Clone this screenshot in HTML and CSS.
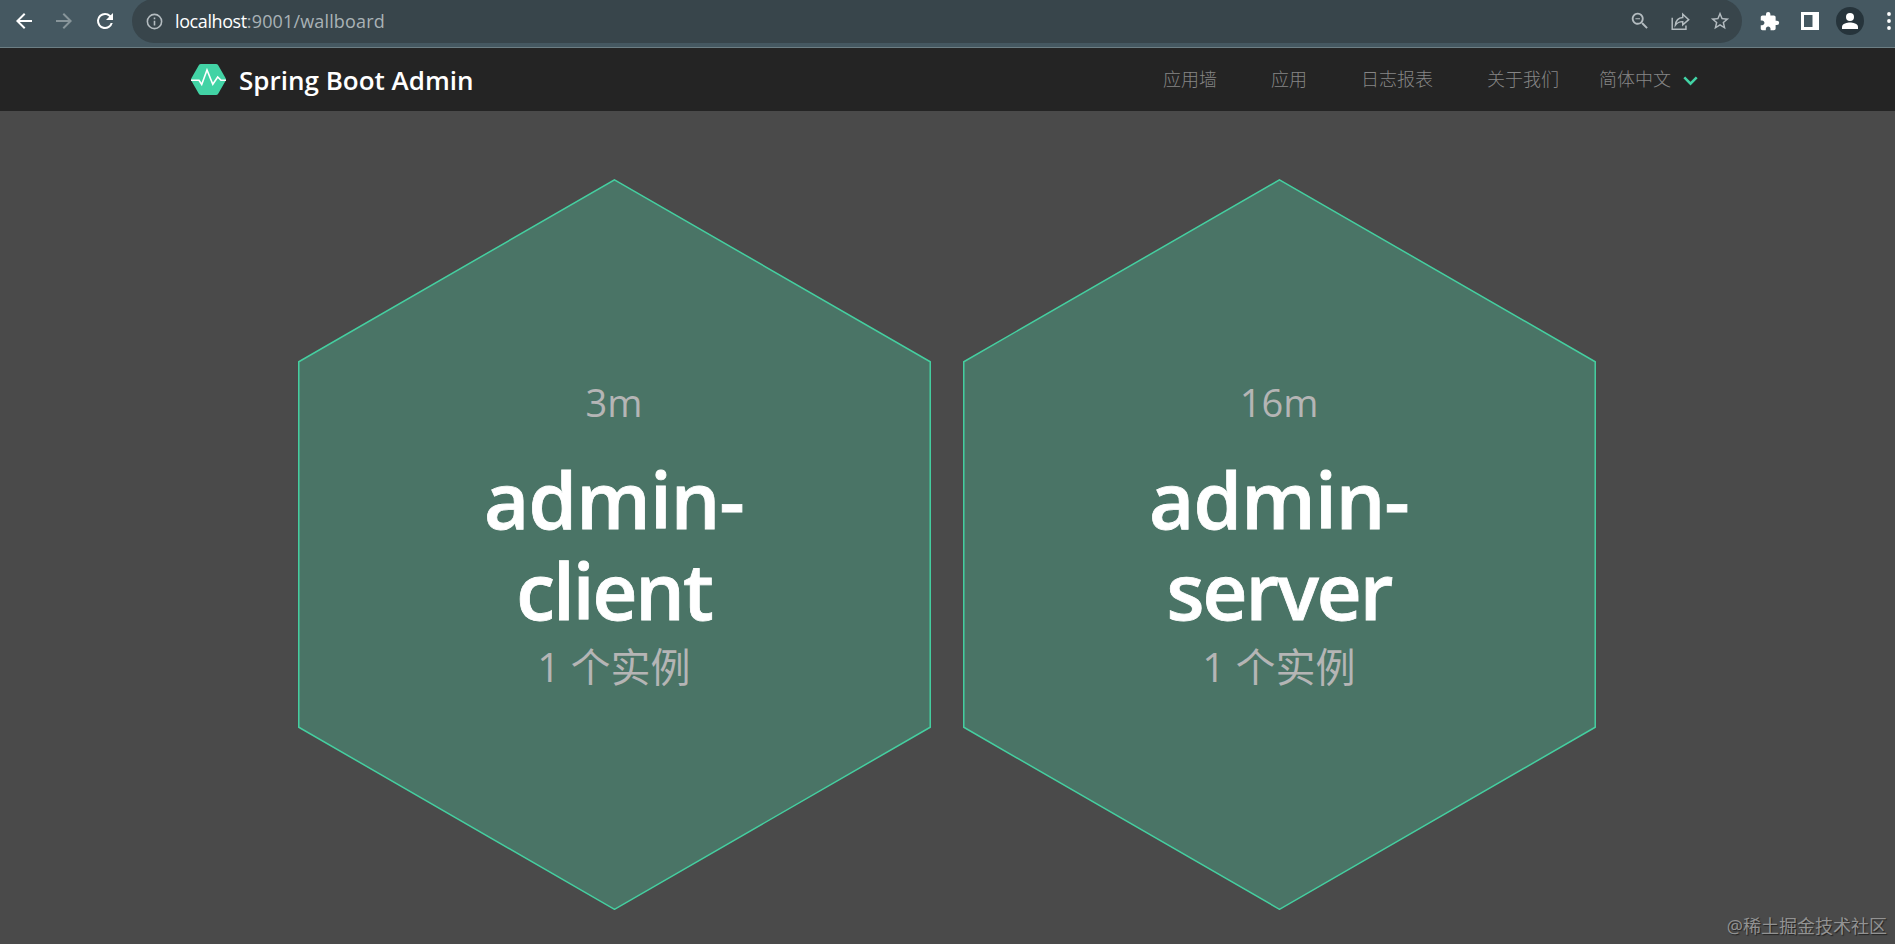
FILE: index.html
```html
<!DOCTYPE html>
<html lang="zh-CN">
<head>
    <meta charset="UTF-8">
    <meta name="viewport" content="width=device-width, initial-scale=1.0">
    <title>Spring Boot Admin</title>
    <link rel="stylesheet" href="styles.css">
</head>
<body>
    <div class="toolbar">
        <div class="nav-buttons">
            <svg class="icon-back" viewBox="0 0 24 24"><path d="M20 11H7.83l5.59-5.59L12 4l-8 8 8 8 1.41-1.41L7.83 13H20z"/></svg>
            <svg class="icon-forward" viewBox="0 0 24 24"><path d="M12 4l-1.41 1.41L16.17 11H4v2h12.17l-5.58 5.59L12 20l8-8z"/></svg>
            <svg class="icon-reload" viewBox="0 0 24 24"><path d="M17.65 6.35A7.96 7.96 0 0 0 12 4a8 8 0 1 0 7.73 10h-2.08A6 6 0 1 1 12 6c1.66 0 3.14.69 4.22 1.78L13 11h7V4z"/></svg>
        </div>
        <div class="address-bar">
            <svg class="icon-info" viewBox="0 0 24 24"><path d="M11 7h2v2h-2zm0 4h2v6h-2zm1-9a10 10 0 1 0 0 20 10 10 0 0 0 0-20zm0 18a8 8 0 1 1 0-16 8 8 0 0 1 0 16z"/></svg>
            <div class="url"><span class="host">localhost</span><span class="path">:9001/wallboard</span></div>
            <div class="address-actions">
                <svg viewBox="0 0 24 24"><path d="M15.500 14h-.79l-.28-.27A6.500 6.500 0 1 0 13.730 14.430l.27.28v.79l5 4.990L20.490 19zm-6 0a4.500 4.500 0 1 1 0-9 4.500 4.500 0 0 1 0 9zM7 9h5v1H7z"/></svg>
                <svg class="stroked" viewBox="0 0 24 24"><path d="M3.500 8.500V21H18.500V17M7 16.500C7.500 11.500 10.500 8.500 15 8.200V4.500L21.500 10.500L15 16.200V12.700C11.500 12.600 9 13.800 7 16.500Z"/></svg>
                <svg viewBox="0 0 24 24"><path d="M22 9.240l-7.190-.62L12 2 9.190 8.630 2 9.240l5.460 4.730L5.820 21 12 17.270 18.180 21l-1.630-7.030zM12 15.400l-3.760 2.270 1-4.280-3.320-2.880 4.380-.38L12 6.100l1.710 4.040 4.380.38-3.320 2.880 1 4.280z"/></svg>
            </div>
        </div>
        <div class="browser-actions">
            <svg class="icon-puzzle" viewBox="0 0 24 24"><path d="M20.500 11H19V7c0-1.100-.9-2-2-2h-4V3.500a2.500 2.500 0 0 0-5 0V5H4c-1.100 0-1.990.9-1.990 2v3.800H3.500c1.490 0 2.700 1.210 2.700 2.700s-1.210 2.700-2.700 2.700H2V20c0 1.100.9 2 2 2h3.800v-1.500c0-1.490 1.210-2.700 2.700-2.700s2.700 1.210 2.700 2.700V22H17c1.100 0 2-.9 2-2v-4h1.500a2.500 2.500 0 0 0 0-5z"/></svg>
            <svg class="icon-panel" viewBox="0 0 18 18"><path fill-rule="evenodd" d="M0 0h18v18H0zM3 3v12h8.500V3z"/></svg>
            <svg class="icon-avatar" viewBox="0 0 28 28"><circle class="avatar-bg" cx="14" cy="14" r="14"/><circle cx="14" cy="10" r="4"/><path d="M6 22v-2.200c0-3 5.300-4.300 8-4.300s8 1.300 8 4.300V22z"/></svg>
            <svg class="icon-menu" viewBox="0 0 4 18"><circle cx="2" cy="2" r="1.900"/><circle cx="2" cy="9" r="1.900"/><circle cx="2" cy="16" r="1.900"/></svg>
        </div>
    </div>

    <nav class="navbar">
        <a class="brand">
            <svg class="logo" viewBox="0 0 35 31">
                <path class="logo-shape" d="M10 0h15q1.500 0 2.200 1.300L34.500 14q.8 1.500 0 3l-7.300 12.700Q26.500 31 25 31H10q-1.500 0-2.200-1.300L.5 17q-.8-1.500 0-3L7.800 1.300Q8.500 0 10 0z"/>
                <path class="logo-pulse" d="M0 16.300h8l2.700 4.200L16 6l5.800 14.300 4.900-7.300 3.300 3.300h5"/>
            </svg>
            <span>Spring Boot Admin</span>
        </a>
        <div class="menu">
            <a>应用墙</a>
            <a>应用</a>
            <a>日志报表</a>
            <a>关于我们</a>
            <a class="language">简体中文
                <svg class="chevron" viewBox="0 0 14 9"><path d="M1.200 1.200L7 7l5.800-5.800"/></svg>
            </a>
        </div>
    </nav>

    <main class="wallboard">
        <div class="hex">
            <svg class="hex-shape" viewBox="0 0 632 730"><path d="M316 .8L631.300 182.500V547.500L316 729.300.7 547.500V182.500z"/></svg>
            <div class="hex-body">
                <div class="uptime">3m</div>
                <h1><span class="prefix">admin-</span><br>client</h1>
                <div class="instances">1 个实例</div>
            </div>
        </div>
        <div class="hex">
            <svg class="hex-shape" viewBox="0 0 632 730"><path d="M316 .8L631.300 182.500V547.500L316 729.300.7 547.500V182.500z"/></svg>
            <div class="hex-body">
                <div class="uptime">16m</div>
                <h1><span class="prefix">admin-</span><br>server</h1>
                <div class="instances">1 个实例</div>
            </div>
        </div>
    </main>
    <div class="watermark">@稀土掘金技术社区</div>
</body>
</html>
```

FILE: styles.css
```css
* {
    box-sizing: border-box;
}
body {
    margin: 0;
    height: 944px;
    overflow: hidden;
    background-color: #4a4a4a;
    font-family: "Open Sans", "Noto Sans CJK SC", sans-serif;
}
svg {
    display: block;
    flex: none;
}

/* browser toolbar */
.toolbar {
    display: flex;
    height: 48px;
    background-color: #455861;
    border-bottom: 1px solid #6c7e84;
    fill: #fff;
}
.nav-buttons {
    display: flex;
    align-items: center;
    gap: 16px;
    width: 132px;
    height: 42px;
    padding-left: 12px;
}
.nav-buttons svg {
    width: 24px;
    height: 24px;
}
.nav-buttons .icon-forward {
    fill: #88959a;
}
.nav-buttons .icon-reload {
    margin-left: 1px;
}
.address-bar {
    display: flex;
    align-items: center;
    width: 1610px;
    height: 44px;
    margin-top: -1px;
    padding: 0 11px 0 13px;
    background-color: #38454b;
    border-radius: 22px;
    fill: #b4bcc0;
}
.icon-info {
    width: 19px;
    height: 19px;
}
.url {
    margin-left: 11px;
    font-size: 18px;
    line-height: 24px;
    white-space: nowrap;
}
.host {
    color: #fff;
    letter-spacing: -0.4px;
}
.path {
    color: #a9b2b6;
    letter-spacing: 0.15px;
}
.address-actions {
    display: flex;
    gap: 18px;
    margin-left: auto;
}
.address-actions svg {
    width: 22px;
    height: 22px;
}
.stroked {
    fill: none;
    stroke: #b4bcc0;
    stroke-width: 1.6;
}
.browser-actions {
    display: flex;
    align-items: center;
    height: 42px;
    padding-left: 17px;
}
.icon-puzzle {
    width: 21px;
    height: 21px;
}
.icon-panel {
    width: 18px;
    height: 18px;
    margin-left: 21px;
}
.icon-avatar {
    width: 28px;
    height: 28px;
    margin-left: 17px;
}
.avatar-bg {
    fill: #26343b;
}
.icon-menu {
    width: 4px;
    height: 18px;
    margin-left: 23px;
}

/* application navbar */
.navbar {
    display: flex;
    justify-content: space-between;
    height: 63px;
    padding: 0 197px 0 191px;
    background-color: #242424;
}
.brand {
    display: flex;
    align-items: center;
    gap: 13px;
    color: #fff;
    font-size: 26px;
    font-weight: 600;
    white-space: nowrap;
}
.logo {
    width: 35px;
    height: 31px;
}
.logo-shape {
    fill: #42d3a5;
}
.logo-pulse {
    fill: none;
    stroke: #fff;
    stroke-width: 1.6;
}
.menu {
    display: flex;
    align-items: center;
    padding-bottom: 3px;
    color: #868686;
    font-family: "Noto Sans CJK SC", sans-serif;
    font-size: 18px;
    font-weight: 300;
    white-space: nowrap;
}
.menu a {
    margin-left: 54px;
}
.menu .language {
    display: flex;
    align-items: center;
    gap: 12px;
    margin-left: 40px;
}
.chevron {
    width: 15px;
    height: 10px;
    margin-top: 6px;
    fill: none;
    stroke: #42d3a5;
    stroke-width: 2.4;
}

/* wallboard */
.wallboard {
    display: flex;
    gap: 32px;
    padding: 68px 0 0 297.5px;
}
.hex {
    display: grid;
    width: 633px;
    height: 731px;
}
.hex-shape,
.hex-body {
    grid-area: 1 / 1;
}
.hex-shape {
    width: 633px;
    height: 731px;
    fill: #4a7466;
    stroke: #45cfa0;
    stroke-width: 1.5;
}
.hex-body {
    padding-top: 197px;
    text-align: center;
    color: #b5b5b5;
}
.uptime {
    height: 78px;
    font-size: 38px;
    line-height: 53px;
}
.hex h1 {
    margin: 0;
    color: #fff;
    font-size: 78px;
    font-weight: 600;
    letter-spacing: -2px;
    line-height: 91px;
    -webkit-text-stroke: 0.8px #fff;
}
.hex .prefix {
    letter-spacing: -0.8px;
}
.instances {
    padding-top: 4px;
    font-size: 40px;
    line-height: 54px;
}

.watermark {
    position: absolute;
    right: 8px;
    bottom: 5px;
    color: #929292;
    font-size: 18px;
    line-height: 26px;
    text-shadow: 1px 1px 1px #222;
}
```
